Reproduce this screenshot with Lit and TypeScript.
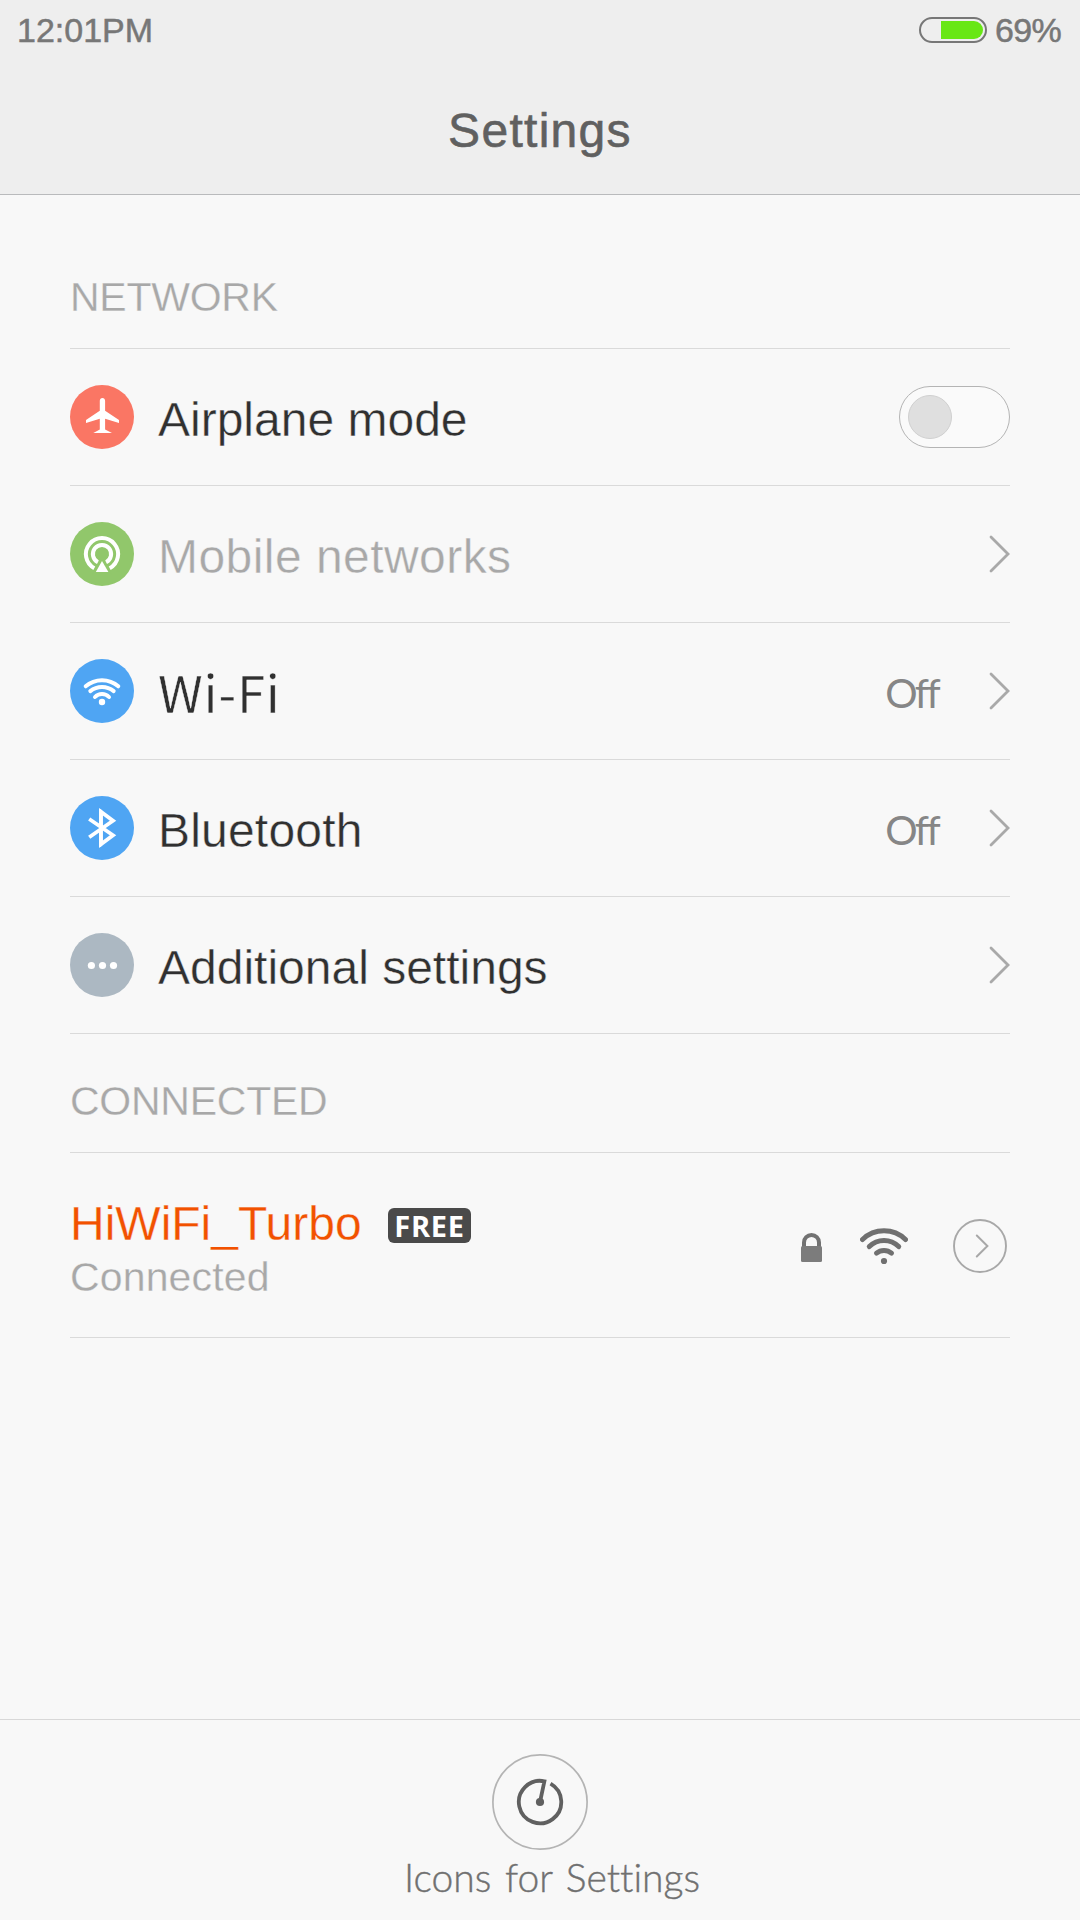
import { LitElement, html, css, svg, nothing, TemplateResult } from "lit";
import { customElement, property } from "lit/decorators.js";
import { classMap } from "lit/directives/class-map.js";

type IconName = "airplane" | "mobile" | "wifi" | "bluetooth" | "more";

interface SettingRow {
  icon: IconName;
  label: string;
  value?: string;
  toggle?: boolean;
}

const ROWS: SettingRow[] = [
  { icon: "airplane", label: "Airplane mode", toggle: true },
  { icon: "mobile", label: "Mobile networks" },
  { icon: "wifi", label: "Wi-Fi", value: "Off" },
  { icon: "bluetooth", label: "Bluetooth", value: "Off" },
  { icon: "more", label: "Additional settings" },
];

const ICONS: Record<IconName, { fill: string; art: TemplateResult }> = {
  airplane: {
    fill: "#fa7664",
    art: svg`<path fill="#fff" d="M32.4 13c1.6 0 2.7 1.2 2.7 2.8v10L49 35v3l-13.9-4.3v10.9L42 48H23.3l6.5-3.4V33.7L16 38v-3l13.8-9.2v-10c0-1.6 1.1-2.8 2.6-2.8z"/>`,
  },
  mobile: {
    fill: "#91c76b",
    art: svg`<g fill="none" stroke="#fff" stroke-width="4"><path d="M24.3 46.3a16.1 16.1 0 1 1 15.4 0"/><path d="M27.9 40.2a9.1 9.1 0 1 1 8.2 0"/></g>
      <path fill="#91c76b" d="M32 33.5 22.3 53h19.4z"/><path fill="#fff" d="M32 39 25.8 50h12.6z"/>`,
  },
  wifi: {
    fill: "#4fa5f3",
    art: svg`<g fill="none" stroke="#fff" stroke-width="4" stroke-linecap="round"><path d="M15.7 27.3a25 25 0 0 1 32.6 0"/><path d="M20.3 32.1a18.7 18.7 0 0 1 23.4 0"/><path d="M25 38a9.6 9.6 0 0 1 14 0"/></g>
      <circle cx="32" cy="43" r="3.2" fill="#fff"/>`,
  },
  bluetooth: {
    fill: "#4fa5f3",
    art: svg`<path fill="none" stroke="#fff" stroke-width="3.8" stroke-linejoin="miter" d="M19.2 23 43 39.2 31 48.2V15.8l12 9L19.2 41.2"/><path fill="#fff" d="M29.1 13h1.5l1.9 2v34l-1.9 2h-1.5z"/>`,
  },
  more: {
    fill: "#acb8c2",
    art: svg`<g fill="#fff"><circle cx="21.4" cy="32.5" r="3.6"/><circle cx="32.5" cy="32.5" r="3.6"/><circle cx="43.5" cy="32.5" r="3.6"/></g>`,
  },
};

@customElement("setting-row")
class SettingRowElement extends LitElement {
  @property({ attribute: false }) row!: SettingRow;

  static styles = css`
    :host {
      display: flex;
      align-items: center;
      box-sizing: border-box;
      height: 137px;
      border-bottom: 1px solid #dadada;
      font-family: "Liberation Sans", Arial, sans-serif;
    }
    .icon { display: block; width: 64px; height: 64px; flex: none; }
    .label {
      flex: 1;
      padding: 5px 0 0 24px;
      font-size: 48px;
      line-height: 56px;
      color: #303030;
      white-space: nowrap;
      -webkit-text-stroke: 0.4px #f8f8f8;
    }
    .mobile { color: #a8a8a8; letter-spacing: 0.45px; }
    .bluetooth { letter-spacing: 0.2px; }
    .wifi {
      font-family: "Noto Sans CJK SC", "Noto Sans", sans-serif;
      font-weight: 400;
      font-size: 51px;
      letter-spacing: 0.8px;
      padding-top: 0;
      -webkit-text-stroke: 0.4px #f8f8f8;
    }
    .value {
      font-family: Lato, sans-serif;
      font-size: 40.5px;
      line-height: 50px;
      letter-spacing: -2.6px;
      color: #868686;
      padding: 4px 51px 0 0;
    }
    .chevron { display: block; width: 21px; height: 38px; flex: none; }
    .toggle {
      box-sizing: border-box;
      display: flex;
      align-items: center;
      width: 111px;
      height: 62px;
      padding-left: 8px;
      border: 1px solid #b4b4b4;
      border-radius: 31px;
      background: #fafafa;
    }
    .knob {
      box-sizing: border-box;
      width: 44px;
      height: 44px;
      border-radius: 50%;
      border: 1px solid #d0d0d0;
      background: #dfdfdf;
    }
  `;

  render() {
    const { icon, label, value, toggle } = this.row;
    const { fill, art } = ICONS[icon];
    return html`
      <svg class="icon" viewBox="0 0 64 64"><circle cx="32" cy="32" r="32" fill=${fill}></circle>${art}</svg>
      <span class=${classMap({ label: true, [icon]: true })}>${label}</span>
      ${value ? html`<span class="value">${value}</span>` : nothing}
      ${toggle
        ? html`<span class="toggle"><span class="knob"></span></span>`
        : html`<svg class="chevron" viewBox="0 0 21 38">
            <path d="M2 2 19 19 2 36" fill="none" stroke="#a9a9a9" stroke-width="2.8" stroke-linecap="round" />
          </svg>`}
    `;
  }
}

@customElement("app-root")
class AppRoot extends LitElement {
  static styles = css`
    :host {
      display: flex;
      flex-direction: column;
      box-sizing: border-box;
      width: 1080px;
      height: 1920px;
      overflow: hidden;
      background: #f8f8f8;
      font-family: "Liberation Sans", Arial, sans-serif;
    }
    .top {
      box-sizing: border-box;
      height: 195px;
      background: #eeeeee;
      border-bottom: 1px solid #b9babc;
    }
    .status {
      display: flex;
      justify-content: space-between;
      height: 60px;
      padding: 0 18px 0 17px;
      color: #777777;
      font-size: 34px;
      line-height: 41px;
      -webkit-text-stroke: 0.5px #777777;
    }
    .time { padding-top: 10px; }
    .power { display: flex; }
    .battery {
      box-sizing: border-box;
      width: 68px;
      height: 26px;
      margin: 17px 8px 0 0;
      padding: 2px;
      border: 2px solid #777777;
      border-radius: 13px;
      display: flex;
      justify-content: flex-end;
    }
    .charge { height: 18px; background: #68e714; border-radius: 0 9px 9px 0; }
    .percent { width: 67px; padding-top: 10px; letter-spacing: -0.7px; }
    .title {
      margin: 0;
      padding-top: 43px;
      text-align: center;
      font-size: 48px;
      line-height: 56px;
      font-weight: 400;
      letter-spacing: 1.3px;
      color: #606060;
      -webkit-text-stroke: 0.6px #606060;
    }
    .content { flex: 1; padding: 0 70px; }
    .section {
      box-sizing: border-box;
      margin: 0;
      display: flex;
      align-items: flex-end;
      height: 119px;
      padding-bottom: 27px;
      border-bottom: 1px solid #dadada;
      font-size: 41px;
      line-height: 48px;
      font-weight: 400;
      letter-spacing: -0.25px;
      color: #a8a8a8;
      -webkit-text-stroke: 0.3px #f8f8f8;
    }
    .first { height: 154px; }
    .network {
      box-sizing: border-box;
      display: flex;
      align-items: center;
      height: 185px;
      border-bottom: 1px solid #dadada;
    }
    .info { flex: 1; padding-top: 7px; }
    .name-line { display: flex; align-items: center; height: 55px; }
    .name {
      font-size: 48px;
      line-height: 56px;
      color: #f25100;
      width: 318px;
      -webkit-text-stroke: 0.3px #f8f8f8;
    }
    .badge {
      width: 83px;
      height: 35px;
      margin-top: 2px;
      border-radius: 6px;
      background: #4a4a4a;
      color: #ffffff;
      font: 700 29px/35px "Open Sans", sans-serif;
      letter-spacing: 0.7px;
      text-align: center;
    }
    .state {
      padding-top: 1px;
      font-size: 41px;
      line-height: 48px;
      letter-spacing: 0.15px;
      color: #a8a8a8;
      -webkit-text-stroke: 0.3px #f8f8f8;
    }
    .lock { display: block; width: 21px; height: 29px; margin-top: 5px; }
    .signal { display: block; width: 48px; height: 37px; margin: 2px 45px 0 38px; }
    .detail { display: block; width: 54px; height: 54px; margin: 2px 3px 0 0; }
    .bottom {
      box-sizing: border-box;
      height: 201px;
      border-top: 1px solid #d8d8d8;
      padding-top: 34px;
      display: flex;
      flex-direction: column;
      align-items: center;
    }
    .dial { display: block; width: 96px; height: 96px; flex: none; }
    .caption {
      padding-left: 24px;
      font-family: Lato, sans-serif;
      font-weight: 300;
      font-size: 39px;
      line-height: 54px;
      font-variant-ligatures: none;
      word-spacing: 3px;
      color: #707070;
      white-space: nowrap;
      -webkit-text-stroke: 0.4px #707070;
    }
  `;

  private charge = 69;

  render() {
    return html`
      <header class="top">
        <div class="status">
          <span class="time">12:01PM</span>
          <div class="power">
            <div class="battery"><div class="charge" style="width:${Math.round(this.charge * 0.61)}px"></div></div>
            <span class="percent">${this.charge}%</span>
          </div>
        </div>
        <h1 class="title">Settings</h1>
      </header>
      <main class="content">
        <h2 class="section first">NETWORK</h2>
        ${ROWS.map((row) => html`<setting-row .row=${row}></setting-row>`)}
        <h2 class="section">CONNECTED</h2>
        <div class="network">
          <div class="info">
            <div class="name-line"><span class="name">HiWiFi_Turbo</span><span class="badge">FREE</span></div>
            <div class="state">Connected</div>
          </div>
          <svg class="lock" viewBox="0 0 21 29">
            <path d="M3 14V9.5a7.5 7.5 0 0 1 15 0V14" fill="none" stroke="#727272" stroke-width="4" />
            <rect y="13" width="21" height="16" rx="1.5" fill="#7c7c7c" />
          </svg>
          <svg class="signal" viewBox="0 0 48 37">
            <g fill="none" stroke="#707070" stroke-width="5" stroke-linecap="round">
              <path d="M2.5 11.5a31 31 0 0 1 43 0" />
              <path d="M9.3 18.6a20.6 20.6 0 0 1 29.4 0" />
              <path d="M16.5 25.2a11.4 11.4 0 0 1 15 0" />
            </g>
            <circle cx="24" cy="33" r="3.1" fill="#707070" />
          </svg>
          <svg class="detail" viewBox="0 0 54 54" fill="none" stroke="#a8a8a8">
            <circle cx="27" cy="27" r="26" stroke-width="1.9" />
            <path d="M23.8 16.5 34.4 27 23.8 37.5" stroke-width="2" stroke-linecap="round" />
          </svg>
        </div>
      </main>
      <footer class="bottom">
        <svg class="dial" viewBox="0 0 96 96" fill="none">
          <circle cx="48" cy="48" r="47.1" stroke="#b4b4b4" stroke-width="1.7" />
          <path d="M58.5 29.6A21.2 21.2 0 1 1 52.4 27.3L48 48" stroke="#606060" stroke-width="3.8" />
          <circle cx="48" cy="48" r="4.1" fill="#606060" />
        </svg>
        <span class="caption">Icons for Settings</span>
      </footer>
    `;
  }
}
